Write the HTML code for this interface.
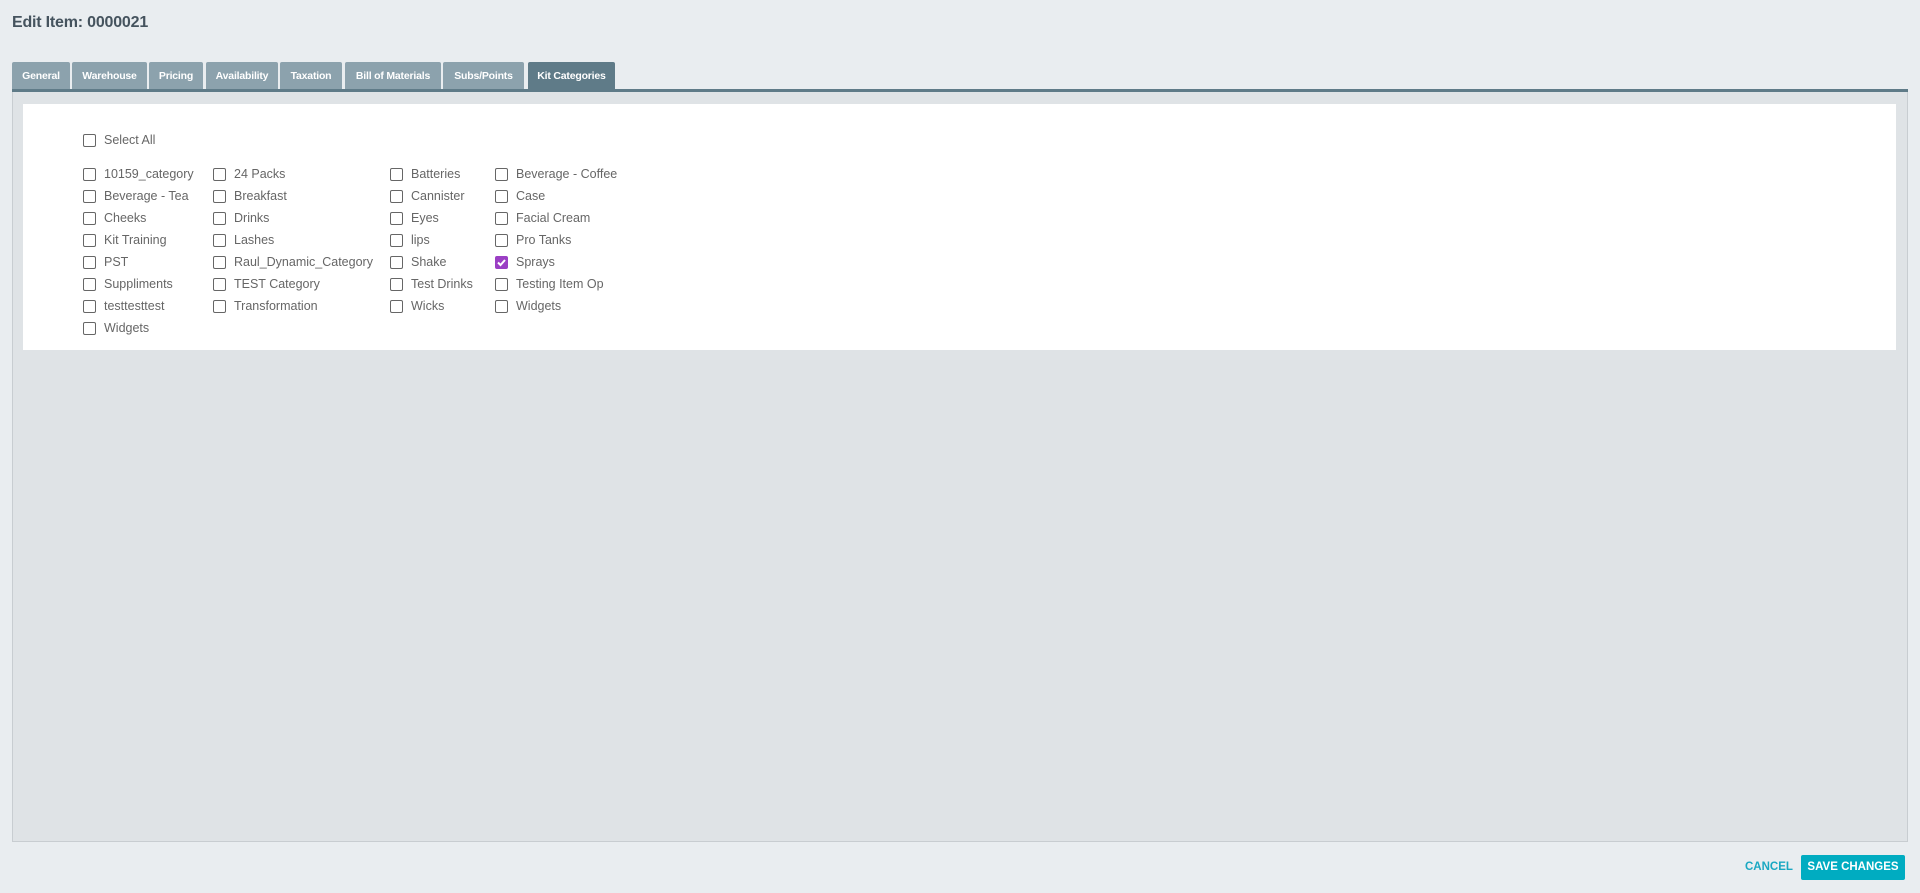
<!DOCTYPE html>
<html><head><meta charset="utf-8"><style>
*{box-sizing:border-box;margin:0;padding:0}
body{width:1920px;height:893px;background:#e9edf0;font-family:"Liberation Sans",sans-serif;position:relative;overflow:hidden}
.title{position:absolute;left:12px;top:14px;font-size:16px;color:#45535e;font-weight:bold;letter-spacing:-0.2px}
.tab{position:absolute;top:62px;height:28px;background:#8ca2ad;color:#fff;font-size:10.5px;font-weight:bold;line-height:28px;text-align:center;border-radius:2px 2px 0 0;letter-spacing:-0.2px}
.tab.on{background:#5f7b88}
.line{position:absolute;left:12px;top:89px;width:1896px;height:3px;background:#5f7b88}
.panel{position:absolute;left:12px;top:92px;width:1896px;height:750px;background:#dfe3e6;border:1px solid #c8cdd1;border-top:none}
.card{position:absolute;left:23px;top:104px;width:1873px;height:246px;background:#fff}
.cb{position:absolute;font-size:12.5px;color:#666;height:16px;line-height:16px;white-space:nowrap}
.cb i{position:absolute;left:-21px;top:2px;width:13px;height:13px;border:1px solid #666;border-radius:2px;background:#fff}
.cb i.c{background:#9b3fc4;border-color:#9b3fc4}
.cancel{position:absolute;left:1745px;top:861px;font-size:11.5px;font-weight:bold;color:#1aa8c2}
.save{position:absolute;left:1801px;top:855px;width:104px;height:25px;background:#00acc1;color:#fff;font-size:11.5px;font-weight:bold;line-height:25px;text-align:center;border-radius:2px}
</style></head><body>
<div class="title">Edit Item: 0000021</div>
<div class="tab" style="left:12px;width:58px">General</div>
<div class="tab" style="left:72px;width:75px">Warehouse</div>
<div class="tab" style="left:149px;width:54px">Pricing</div>
<div class="tab" style="left:206px;width:72px">Availability</div>
<div class="tab" style="left:280px;width:62px">Taxation</div>
<div class="tab" style="left:345px;width:96px">Bill of Materials</div>
<div class="tab" style="left:443px;width:81px">Subs/Points</div>
<div class="tab on" style="left:528px;width:87px">Kit Categories</div>
<div class="line"></div>
<div class="panel"></div>
<div class="card"></div>
<div class="cb" style="left:104px;top:132px"><i></i>Select All</div>
<div id="g"></div>
<script>
var cols=[[104,["10159_category","Beverage - Tea","Cheeks","Kit Training","PST","Suppliments","testtesttest","Widgets"]],
[234,["24 Packs","Breakfast","Drinks","Lashes","Raul_Dynamic_Category","TEST Category","Transformation"]],
[411,["Batteries","Cannister","Eyes","lips","Shake","Test Drinks","Wicks"]],
[516,["Beverage - Coffee","Case","Facial Cream","Pro Tanks","Sprays","Testing Item Op","Widgets"]]];
var h="";cols.forEach(function(c){c[1].forEach(function(t,i){h+='<div class="cb" style="left:'+c[0]+'px;top:'+(166+22*i)+'px"><i'+(t=="Sprays"?' class="c"><svg width="11" height="11" viewBox="0 0 11 11" style="position:absolute;left:0;top:0"><path d="M2 5.5l2.5 2.5 4.5-5" stroke="#fff" stroke-width="2" fill="none"/></svg></i>':'></i>')+t+'</div>';});});
document.getElementById("g").innerHTML=h;
</script>
<div class="cancel">CANCEL</div>
<div class="save">SAVE CHANGES</div>
</body></html>
